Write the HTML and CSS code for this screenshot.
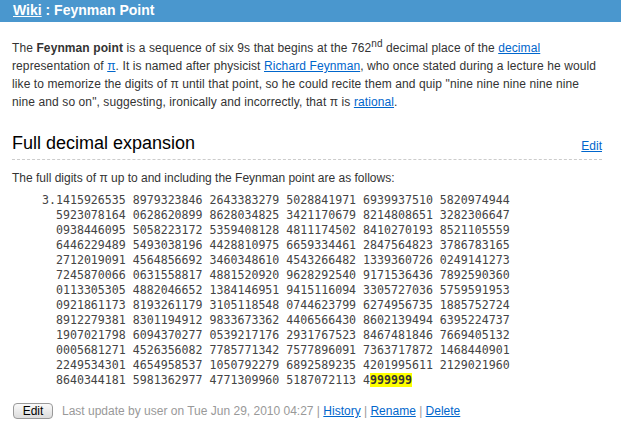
FILE: index.html
```html
<!DOCTYPE html>
<html lang="en">
<head>
    <meta charset="UTF-8">
    <title>Wiki : Feynman Point</title>
    <link rel="stylesheet" href="styles.css">
</head>
<body>
    <div class="titlebar">
        <a href="#">Wiki</a> : Feynman Point
    </div>

    <div class="page">
        <p class="intro">The <b>Feynman point</b> is a sequence of six 9s that begins at the 762<sup>nd</sup> decimal place of the <a href="#">decimal</a>
        representation of <a href="#">&pi;</a>. It is named after physicist <a href="#">Richard Feynman</a>, who once stated during a lecture he would
        like to memorize the digits of &pi; until that point, so he could recite them and quip "nine nine nine nine nine
        nine and so on", suggesting, ironically and incorrectly, that &pi; is <a href="#">rational</a>.</p>

        <div class="section-head">
            <h2>Full decimal expansion</h2>
            <a href="#" class="edit-link">Edit</a>
        </div>

        <p class="lead">The full digits of &pi; up to and including the Feynman point are as follows:</p>

<pre class="digits">3.1415926535 8979323846 2643383279 5028841971 6939937510 5820974944
  5923078164 0628620899 8628034825 3421170679 8214808651 3282306647
  0938446095 5058223172 5359408128 4811174502 8410270193 8521105559
  6446229489 5493038196 4428810975 6659334461 2847564823 3786783165
  2712019091 4564856692 3460348610 4543266482 1339360726 0249141273
  7245870066 0631558817 4881520920 9628292540 9171536436 7892590360
  0113305305 4882046652 1384146951 9415116094 3305727036 5759591953
  0921861173 8193261179 3105118548 0744623799 6274956735 1885752724
  8912279381 8301194912 9833673362 4406566430 8602139494 6395224737
  1907021798 6094370277 0539217176 2931767523 8467481846 7669405132
  0005681271 4526356082 7785771342 7577896091 7363717872 1468440901
  2249534301 4654958537 1050792279 6892589235 4201995611 2129021960
  8640344181 5981362977 4771309960 5187072113 4<span class="feynman">999999</span></pre>

        <div class="footer">
            <button class="edit-btn">Edit</button>
            <span class="meta">Last update by user on Tue Jun 29, 2010 04:27 | <a href="#">History</a> | <a href="#">Rename</a> | <a href="#">Delete</a></span>
        </div>
    </div>
</body>
</html>
```

FILE: styles.css
```css
body {
    margin: 0;
    font-family: "Liberation Sans", Arial, sans-serif;
    font-size: 12px;
    color: #333;
    background: #fff;
}

a {
    color: #0066cc;
}

.titlebar {
    background-color: #4a97ce;
    color: #fff;
    font-weight: bold;
    font-size: 14px;
    height: 22px;
    line-height: 21px;
    padding-left: 13px;
}

.titlebar a {
    color: #fff;
}

.page {
    padding: 0 19px 0 12px;
}

.intro {
    margin: 17px 0 0;
    line-height: 18px;
    letter-spacing: 0.1px;
}

.intro sup {
    font-size: 10px;
    line-height: 0;
}

.section-head {
    display: flex;
    justify-content: space-between;
    align-items: flex-end;
    border-bottom: 1px dashed #ccc;
    margin-top: 21px;
    padding-bottom: 5px;
}

h2 {
    margin: 0;
    font-size: 18px;
    font-weight: normal;
    color: #000;
    line-height: 22px;
}

.edit-link {
    font-size: 12px;
    line-height: 16px;
}

.lead {
    margin: 9px 0 0;
    line-height: 18px;
}

.digits {
    margin: 6px 0 0;
    padding-left: 30px;
    font-family: "DejaVu Sans Mono", monospace;
    font-size: 11.6px;
    line-height: 15px;
    color: #444;
}

.feynman {
    background: #ffff00;
    font-weight: bold;
    color: #333;
}

.footer {
    display: flex;
    align-items: center;
    gap: 9px;
    margin-top: 15px;
    padding-left: 1px;
}

.edit-btn {
    font-family: "Liberation Sans", Arial, sans-serif;
    font-size: 12px;
    color: #000;
    width: 40px;
    height: 16px;
    padding: 0;
    border: 1px solid #999;
    border-radius: 4px;
    background: linear-gradient(#fafafa, #dcdcdc);
    line-height: 14px;
}

.meta {
    color: #999;
    font-size: 12px;
}
```
